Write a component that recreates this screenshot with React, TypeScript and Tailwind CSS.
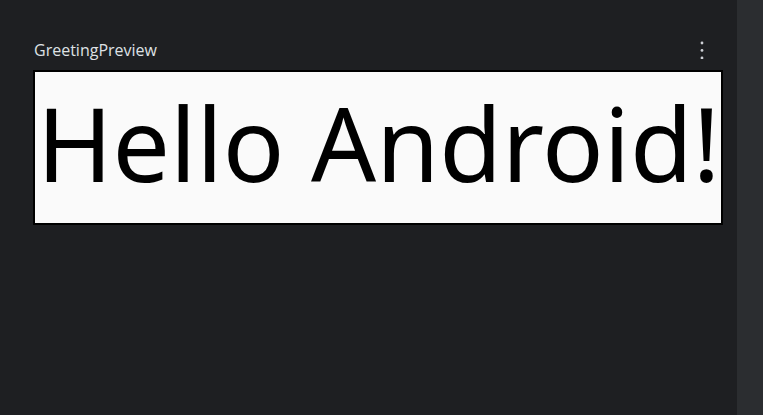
import React from "react";

const MoreIcon = () => (
  <svg width="4" height="18" viewBox="0 0 4 18" className="text-[#ced0d6]">
    <circle cx="2" cy="2" r="1.4" fill="currentColor" />
    <circle cx="2" cy="9.4" r="1.4" fill="currentColor" />
    <circle cx="2" cy="17" r="1.4" fill="currentColor" />
  </svg>
);

const App = () => {
  return (
    <div className="flex h-[415px] w-[763px] overflow-hidden bg-[#1e1f22]">
      {/* preview canvas */}
      <div className="flex-1 pl-[33px] pr-[14px] pt-[38px]">
        <div className="flex h-[24px] w-[690px] items-center justify-between">
          <span
            className="pl-[1px] text-[16px] text-[#dfe1e5]"
            style={{ fontFamily: '"Open Sans", sans-serif' }}
          >
            GreetingPreview
          </span>
          <div className="mr-[19px] flex items-center">
            <MoreIcon />
          </div>
        </div>
        <div className="mt-[8px] h-[155px] w-[690px] border-2 border-black bg-[#fafafa]">
          <div
            className="whitespace-nowrap pl-[2px] pt-[20px] text-[102px] leading-none text-black"
            style={{ fontFamily: '"Noto Sans", sans-serif' }}
          >
            Hello Android!
          </div>
        </div>
      </div>
      {/* right gutter */}
      <div className="w-[26px] bg-[#2b2d30]" />
    </div>
  );
};

export default App;
